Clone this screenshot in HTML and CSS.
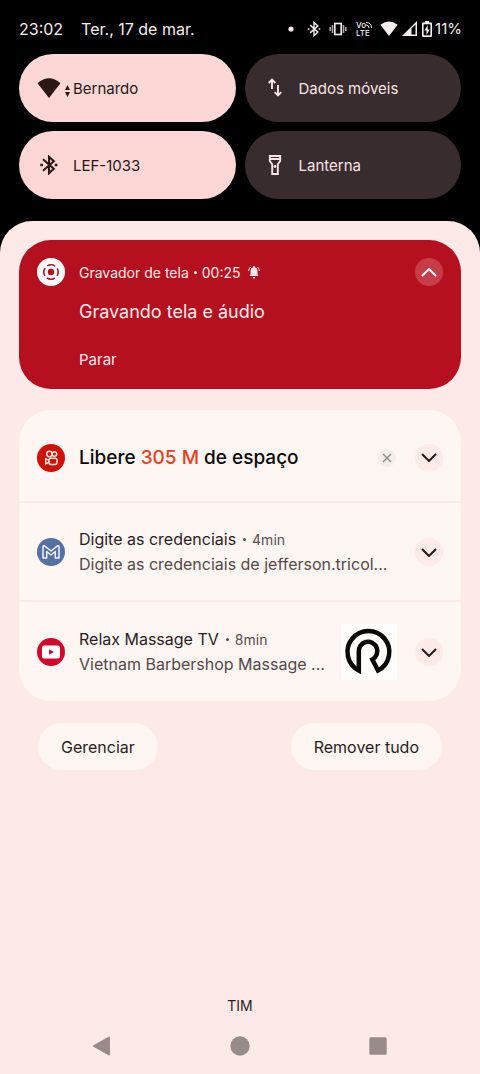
FILE: index.html
```html
<!DOCTYPE html>
<html lang="pt-BR">
<head>
<meta charset="utf-8">
<meta name="viewport" content="width=device-width, initial-scale=1">
<title>Notificações</title>
<link rel="stylesheet" href="styles.css">
</head>
<body>
<div class="screen">
  <header class="status">
    <time class="clock">23:02</time>
    <span class="date">Ter., 17 de mar.</span>
    <div class="status-icons">
      <svg class="i-dot" width="6" height="6" viewBox="0 0 6 6"><circle cx="3" cy="3" r="2.6" fill="currentColor"/></svg>
      <svg class="i-bt" width="14" height="16" viewBox="0 0 18 20" fill="none" stroke="currentColor" stroke-width="1.8"><path d="M4 5l10 9-5 4.500V1.500L14 6 4 15"/><path d="M1 10h2M15 10h2"/></svg>
      <svg class="i-vib" width="18" height="14" viewBox="0 0 18 14" fill="none" stroke="currentColor" stroke-width="1.600"><rect x="5.800" y="1.500" width="6.400" height="11"/><path d="M3.500 3v8M14.500 3v8M1.200 5v4M16.800 5v4" opacity=".7"/></svg>
      <span class="volte"><span class="volte-row">Vo<svg width="6" height="6" viewBox="0 0 6 6" fill="none" stroke="currentColor"><path d="M0 .5Q5.500 .5 5.500 6M0 3Q3 3 3 6"/></svg></span><span>LTE</span></span>
      <svg class="i-wifi" width="18" height="15" viewBox="0 0 24 20"><path d="M12 20L.5 5Q12-4 23.500 5z" fill="currentColor"/></svg>
      <svg class="i-signal" width="15" height="15" viewBox="0 0 15 15"><path d="M0 15L15 0v15z" fill="currentColor"/><path d="M9.500 7.500l4-4v10h-4z" fill="#000"/></svg>
      <svg class="i-battery" width="10" height="16" viewBox="0 0 10 16"><path d="M3 1.500V0h4v1.500h2q1 0 1 1V15q0 1-1 1H1q-1 0-1-1V2.500q0-1 1-1z" fill="currentColor"/><path d="M1.600 3.300h6.800v11H1.600z" fill="#000"/><path d="M5.700 4L2.500 9.500h2V14l3.200-5.500h-2z" fill="currentColor"/></svg>
      <span class="percent">11%</span>
    </div>
  </header>

  <section class="tiles">
    <button class="tile on" type="button">
      <svg class="tile-icon" width="24" height="20" viewBox="0 0 24 20"><path d="M12 20L.5 5.200Q12-4.500 23.500 5.200z" fill="currentColor"/></svg>
      <svg class="activity" width="5" height="12" viewBox="0 0 5 12"><path d="M0 5L2.500 0 5 5zM0 7h5l-2.500 5z" fill="currentColor"/></svg>
      <span>Bernardo</span>
    </button>
    <button class="tile" type="button">
      <svg class="tile-icon" width="24" height="20" viewBox="0 0 24 20" fill="none" stroke="currentColor" stroke-width="1.900"><path d="M9 11V3M5.700 5L9 1.700 12.300 5M15 7v10M11.700 14.200l3.300 3.300 3.300-3.300"/></svg>
      <span>Dados móveis</span>
    </button>
    <button class="tile on" type="button">
      <svg class="tile-icon" width="24" height="20" viewBox="0 0 24 20" fill="none" stroke="currentColor" stroke-width="2.100"><path d="M6 4.300l10.800 9.400-4.800 4.500V1.800l4.800 4.500L6 15.700"/><path d="M3.300 10h2.600M17.800 10h2.600" stroke-width="2.600"/></svg>
      <span>LEF-1033</span>
    </button>
    <button class="tile" type="button">
      <svg class="tile-icon" width="24" height="20" viewBox="0 0 24 20" fill="none" stroke="currentColor" stroke-width="1.900"><path d="M6.800 1h10.400v5l-2.400 3.200v9.800H9.200V9.200L6.800 6zM6.800 4h10.400"/><circle cx="12" cy="11.500" r="1.400" fill="currentColor" stroke="none"/></svg>
      <span>Lanterna</span>
    </button>
  </section>

  <main class="shade">
    <article class="recorder">
      <svg class="badge" width="28" height="28" viewBox="0 0 28 28"><circle cx="14" cy="14" r="14" fill="#fff"/><circle cx="14" cy="14" r="3.200" fill="#b5101f"/><circle cx="14" cy="14" r="7.200" fill="none" stroke="#b5101f" stroke-width="1.600" stroke-dasharray="8.300 3.010" stroke-dashoffset="4.150"/></svg>
      <div class="recorder-text">
        <p class="recorder-head"><span>Gravador de tela</span><span class="sep"></span><span>00:25</span>
          <svg width="12" height="13" viewBox="0 0 12 13" fill="currentColor"><path d="M6 0q1 0 1 1.200Q9.500 2 9.500 5v3.500l1 1.500h-9l1-1.500V5Q2.500 2 5 1.200 5 0 6 0zM4.700 11h2.600Q7 12.800 6 12.800 5 12.800 4.700 11z"/><path d="M2.500 1Q.7 2.500.6 5M9.500 1q1.800 1.500 1.900 4" fill="none" stroke="currentColor"/></svg>
        </p>
        <h2 class="recorder-title">Gravando tela e áudio</h2>
        <button class="stop" type="button">Parar</button>
      </div>
      <button class="round light" type="button" aria-label="Recolher"><svg width="16" height="9" viewBox="0 0 16 9"><path d="M1 8l7-7 7 7"/></svg></button>
    </article>

    <section class="list">
      <article class="note promo">
        <svg class="badge" width="28" height="28" viewBox="0 0 28 28" fill="none" stroke="#ffe9dc" stroke-width="1.500"><circle cx="14" cy="14" r="14" fill="#cf1108" stroke="none"/><circle cx="12.400" cy="10" r="2.700"/><circle cx="17.400" cy="10" r="2.300"/><rect x="12" y="14.200" width="8" height="6.200" rx="1.800"/><path d="M12 16.200l-3.300-1.400v5L12 18.400"/></svg>
        <h3 class="promo-title">Libere <em>305 M</em> de espaço</h3>
        <button class="dismiss" type="button" aria-label="Dispensar"><svg width="10" height="10" viewBox="0 0 10 10"><path d="M1 1l8 8M9 1L1 9"/></svg></button>
        <button class="round" type="button" aria-label="Expandir"><svg width="16" height="9" viewBox="0 0 16 9"><path d="M1 1l7 7 7-7"/></svg></button>
      </article>
      <article class="note">
        <svg class="badge" width="28" height="28" viewBox="0 0 28 28"><circle cx="14" cy="14" r="14" fill="#56709f"/><path d="M6 20V9q0-1.500 1.500-1.200L14 13l6.500-5.200Q22 7.500 22 9v11h-3.700v-6.500L14 17l-4.300-3.500V20z" fill="none" stroke="#f1f4ff" stroke-width="1.500" stroke-linejoin="round"/></svg>
        <div class="note-text">
          <h3 class="note-title">Digite as credenciais <small><span class="sep"></span>4min</small></h3>
          <p class="note-body">Digite as credenciais de jefferson.tricol...</p>
        </div>
        <button class="round" type="button" aria-label="Expandir"><svg width="16" height="9" viewBox="0 0 16 9"><path d="M1 1l7 7 7-7"/></svg></button>
      </article>
      <article class="note">
        <svg class="badge" width="28" height="28" viewBox="0 0 28 28"><circle cx="14" cy="14" r="14" fill="#cf0a2c"/><rect x="5" y="7.500" width="18" height="13" rx="2.500" fill="#fff"/><path d="M12 11.300v5.400l5-2.700z" fill="#cf0a2c"/></svg>
        <div class="note-text">
          <h3 class="note-title">Relax Massage TV <small><span class="sep"></span>8min</small></h3>
          <p class="note-body">Vietnam Barbershop Massage ...</p>
        </div>
        <svg class="thumb" width="56" height="56" viewBox="0 0 56 56"><rect width="56" height="56" fill="#fffdfb"/><path d="M17.800 46.500A20.900 20.900 0 1 1 37 46.500L31.300 35.400A9.300 9.300 0 1 0 17.800 28z" fill="none" stroke="#080808" stroke-width="4.500"/></svg>
        <button class="round" type="button" aria-label="Expandir"><svg width="16" height="9" viewBox="0 0 16 9"><path d="M1 1l7 7 7-7"/></svg></button>
      </article>
    </section>

    <div class="actions">
      <button class="pill" type="button">Gerenciar</button>
      <button class="pill" type="button">Remover tudo</button>
    </div>

    <footer class="bottom">
      <p class="carrier">TIM</p>
      <nav class="nav">
        <button type="button" aria-label="Voltar"><svg width="20" height="20" viewBox="0 0 20 20"><path d="M2 10L17 1.500v17z" stroke-width="2" stroke-linejoin="round"/></svg></button>
        <button type="button" aria-label="Início"><svg width="20" height="20" viewBox="0 0 20 20"><circle cx="10" cy="10" r="9.700" stroke="none"/></svg></button>
        <button type="button" aria-label="Recentes"><svg width="20" height="20" viewBox="0 0 20 20"><rect x="1.300" y="1.300" width="17.400" height="17.400" rx="1.500" stroke="none"/></svg></button>
      </nav>
    </footer>
  </main>
</div>
</body>
</html>
```
FILE: styles.css
```css
* { box-sizing: border-box; }
body {
  margin: 0;
  background: #000;
  font-family: Inter, "Open Sans", sans-serif;
  font-size: 16px;
  color: #2a1c1d;
}
h2, h3, p { margin: 0; font-weight: 400; }
button {
  font: inherit;
  color: inherit;
  border: 0;
  padding: 0;
  background: none;
}
svg { display: block; flex: none; }

.screen { min-height: 100vh; display: flex; flex-direction: column; }

.status {
  display: flex;
  align-items: center;
  height: 54px;
  padding: 3px 18px 0 19px;
  color: #f6eeee;
  white-space: nowrap;
}
.date { margin-left: 18px; }
.status-icons { display: flex; align-items: center; margin-left: auto; }
.i-bt { margin-left: 13px; }
.i-vib { margin-left: 8px; }
.volte {
  display: flex;
  flex-direction: column;
  margin-left: 9px;
  font-size: 8px;
  font-weight: 500;
  line-height: 8px;
}
.volte-row { display: flex; align-items: center; }
.i-wifi { margin-left: 8px; }
.i-signal { margin-left: 4px; }
.i-battery { margin-left: 5px; }
.percent { margin-left: 3px; font-size: 15px; }

.tiles {
  display: grid;
  grid-template-columns: 1fr 1fr;
  gap: 9px;
  padding: 0 19px 22px;
}
.tile {
  position: relative;
  display: flex;
  align-items: center;
  gap: 12px;
  height: 68px;
  padding: 0 18px;
  border-radius: 34px;
  background: #392c2e;
  color: #f8e4e4;
  font-size: 15px;
  text-align: left;
}
.tile.on { background: #fcd7d5; color: #2a1815; }
.activity { position: absolute; left: 46px; top: 31px; }

.shade {
  flex: 1;
  display: flex;
  flex-direction: column;
  padding: 19px 19px 0;
  border-radius: 32px 32px 0 0;
  background: #fde9e8;
}

.recorder {
  display: flex;
  align-items: flex-start;
  gap: 14px;
  padding: 18px 18px 17px;
  border-radius: 32px;
  background: #b5101f;
  color: #ffeceb;
}
.recorder-text { flex: 1; }
.recorder-head {
  display: flex;
  align-items: center;
  gap: 5px;
  height: 28px;
  font-size: 14px;
}
.recorder-head svg { margin-left: 2px; }
.recorder-title { margin-top: 14px; font-size: 18px; line-height: 24px; }
.stop { display: block; margin-top: 24px; font-size: 15px; line-height: 24px; }

.sep {
  flex: none;
  width: 3px;
  height: 3px;
  border-radius: 50%;
  background: currentColor;
}

.round {
  flex: none;
  display: grid;
  place-items: center;
  width: 28px;
  height: 28px;
  border-radius: 50%;
  background: #feeae9;
}
.round.light { background: #c63d48; }
.round path { fill: none; stroke: #251719; stroke-width: 2; }
.round.light path { stroke: #fff; }

.list {
  display: grid;
  gap: 2px;
  margin-top: 21px;
  border-radius: 32px;
  overflow: hidden;
  background: #fbebe8;
}
.note {
  display: flex;
  align-items: center;
  gap: 14px;
  min-height: 97px;
  padding: 3px 18px 2px;
  background: #fef6f3;
}
.note:last-child { min-height: 99px; }
.promo { min-height: 91px; padding-top: 6px; }
.promo-title {
  flex: 1;
  font-size: 19px;
  line-height: 24px;
  font-weight: 500;
  color: #0b0808;
}
.promo-title em { font-style: normal; color: #e4421e; }
.dismiss {
  display: grid;
  place-items: center;
  width: 18px;
  height: 18px;
  margin-right: 5px;
  border-radius: 50%;
  background: #f4eeeb;
}
.dismiss path { stroke: #8b8583; stroke-width: 1.3; }
.note-text { flex: 1; min-width: 0; white-space: nowrap; }
.note-title {
  display: flex;
  align-items: center;
  gap: 7px;
  font-size: 16px;
  line-height: 25px;
}
.note-title small {
  display: flex;
  align-items: center;
  gap: 6px;
  font-size: 14px;
  color: #5b4d4d;
}
.note-body { font-size: 16px; line-height: 25px; color: #554848; }
.thumb { margin-right: 4px; }

.actions {
  display: flex;
  justify-content: space-between;
  padding: 22px 19px 0;
}
.pill {
  height: 47px;
  padding: 0 23px;
  border-radius: 24px;
  background: #fef6f3;
}

.bottom { margin-top: auto; }
.carrier { text-align: center; font-size: 14px; line-height: 20px; }
.nav {
  display: flex;
  justify-content: space-between;
  padding: 20px 73px 18px;
}
.nav svg { fill: #998b8a; stroke: #998b8a; }
```
